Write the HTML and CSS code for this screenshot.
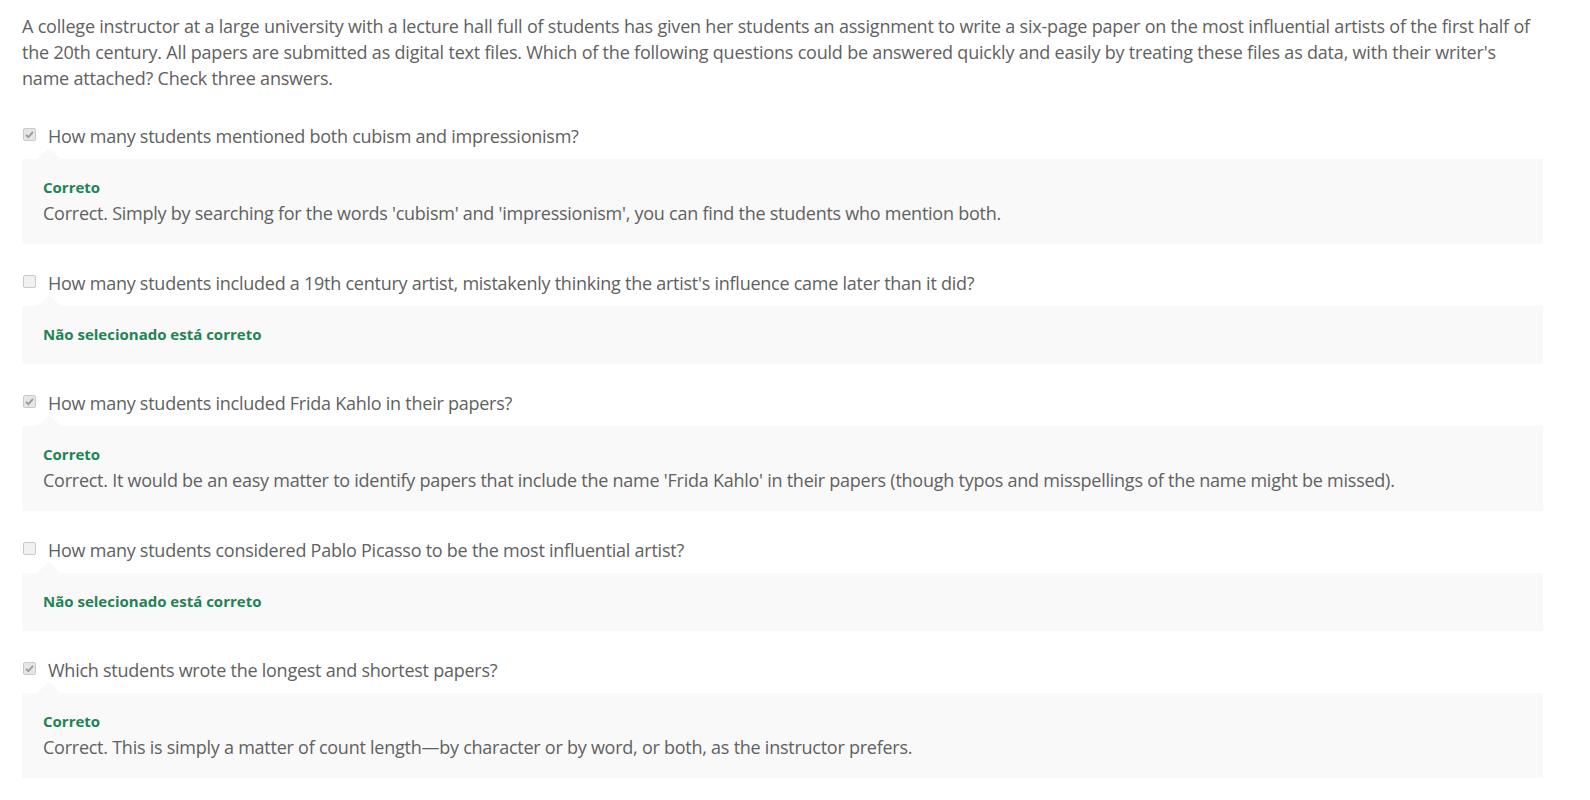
FILE: index.html
```html
<!DOCTYPE html>
<html lang="en">
<head>
<meta charset="utf-8">
<title>Quiz feedback</title>
<link rel="stylesheet" href="styles.css">
</head>
<body>
<div class="quiz">
  <p class="prompt">A college instructor at a large university with a lecture hall full of students has given her students an assignment to write a six-page paper on the most influential artists of the first half of the 20th century. All papers are submitted as digital text files. Which of the following questions could be answered quickly and easily by treating these files as data, with their writer's name attached? Check three answers.</p>

  <div class="option">
    <div class="choice"><span class="box checked"><svg viewBox="0 0 13 13" width="13" height="13"><path d="M3 6.8 L5.4 9.2 L10 3.8" fill="none" stroke="#9a9a9a" stroke-width="1.8"/></svg></span><span class="label">How many students mentioned both cubism and impressionism?</span></div>
    <div class="feedback">
      <div class="verdict">Correto</div>
      <div class="explain">Correct. Simply by searching for the words 'cubism' and 'impressionism', you can find the students who mention both.</div>
    </div>
  </div>

  <div class="option">
    <div class="choice"><span class="box"></span><span class="label">How many students included a 19th century artist, mistakenly thinking the artist's influence came later than it did?</span></div>
    <div class="feedback">
      <div class="verdict">Não selecionado está correto</div>
    </div>
  </div>

  <div class="option">
    <div class="choice"><span class="box checked"><svg viewBox="0 0 13 13" width="13" height="13"><path d="M3 6.8 L5.4 9.2 L10 3.8" fill="none" stroke="#9a9a9a" stroke-width="1.8"/></svg></span><span class="label">How many students included Frida Kahlo in their papers?</span></div>
    <div class="feedback">
      <div class="verdict">Correto</div>
      <div class="explain">Correct. It would be an easy matter to identify papers that include the name 'Frida Kahlo' in their papers (though typos and misspellings of the name might be missed).</div>
    </div>
  </div>

  <div class="option">
    <div class="choice"><span class="box"></span><span class="label">How many students considered Pablo Picasso to be the most influential artist?</span></div>
    <div class="feedback">
      <div class="verdict">Não selecionado está correto</div>
    </div>
  </div>

  <div class="option">
    <div class="choice"><span class="box checked"><svg viewBox="0 0 13 13" width="13" height="13"><path d="M3 6.8 L5.4 9.2 L10 3.8" fill="none" stroke="#9a9a9a" stroke-width="1.8"/></svg></span><span class="label">Which students wrote the longest and shortest papers?</span></div>
    <div class="feedback">
      <div class="verdict">Correto</div>
      <div class="explain">Correct. This is simply a matter of count length—by character or by word, or both, as the instructor prefers.</div>
    </div>
  </div>
</div>
</body>
</html>
```

FILE: styles.css
```css
html, body {
  margin: 0;
  padding: 0;
  background: #ffffff;
}
body {
  font-family: "Open Sans", "Liberation Sans", sans-serif;
  color: #616161;
  font-size: 18px;
  letter-spacing: -0.25px;
}
.quiz {
  width: 1521px;
  padding: 13px 0 0 22px;
}
.prompt {
  margin: 0 0 32px 0;
  padding-right: 10px;
  line-height: 26px;
  letter-spacing: -0.2px;
}
.option {
  margin-bottom: 26px;
}
.choice {
  display: flex;
  align-items: center;
  height: 26px;
}
.box {
  width: 13px;
  height: 13px;
  box-sizing: border-box;
  border: 1px solid #c9c9c9;
  border-radius: 2px;
  background: #f1f1f1;
  margin: -3px 12px 0 1px;
  display: flex;
  align-items: center;
  justify-content: center;
}
.box.checked {
  background: #e6e6e6;
}
.box svg {
  display: block;
  margin: -1px;
}
.label {
  line-height: 26px;
}
.feedback {
  position: relative;
  margin-top: 10px;
  background: #f9f9f9;
  padding: 17px 20px 18px 21px;
}
.feedback::before {
  content: "";
  position: absolute;
  left: 15px;
  top: -11px;
  width: 0;
  height: 0;
  border-left: 12px solid transparent;
  border-right: 12px solid transparent;
  border-bottom: 11px solid #f9f9f9;
}
.verdict {
  color: #1f8354;
  font-weight: 700;
  font-size: 15px;
  line-height: 22px;
  letter-spacing: 0;
}
.verdict:only-child {
  margin-bottom: 1px;
}
.explain {
  margin-top: 2px;
  line-height: 26px;
}
```
